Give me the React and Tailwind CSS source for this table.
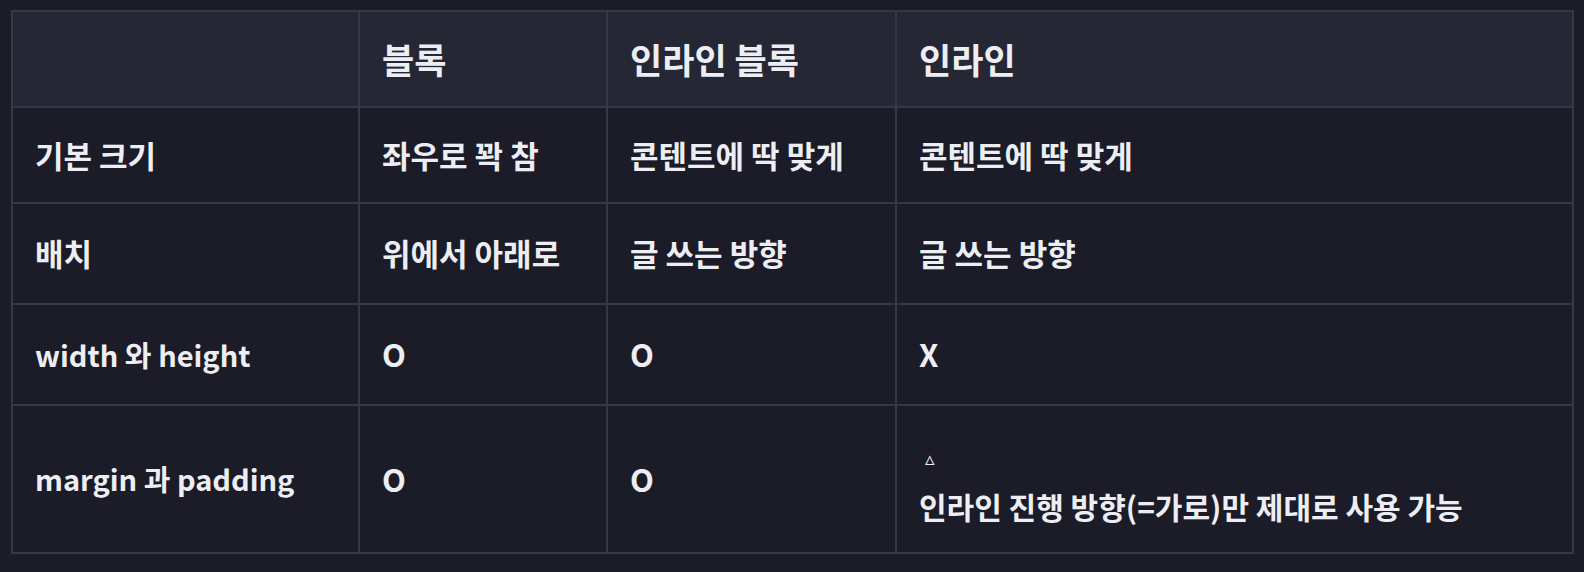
const rows = [
  { label: "기본 크기", block: "좌우로 꽉 참", inlineBlock: "콘텐트에 딱 맞게", inline: "콘텐트에 딱 맞게", h: "h-[96px]", labelSize: "" },
  { label: "배치", block: "위에서 아래로", inlineBlock: "글 쓰는 방향", inline: "글 쓰는 방향", h: "h-[101px]", labelSize: "" },
  { label: "width 와 height", block: "O", inlineBlock: "O", inline: "X", h: "h-[101px]", labelSize: "text-[29px]" },
];

export default function App() {
  const cell = "border-2 border-[#363849] px-[22px] align-middle";

  return (
    <div
      className="w-[1584px] h-[572px] bg-[#1b1c27] pt-[10px] pl-[11px] text-[#eceef3] font-bold"
      style={{ fontFamily: '"Noto Sans CJK KR", "Noto Sans", sans-serif' }}
    >
      <table className="table-fixed border-collapse w-[1563px] text-[31px]">
        <colgroup>
          <col className="w-[347px]" />
          <col className="w-[248px]" />
          <col className="w-[289px]" />
          <col />
        </colgroup>
        <thead>
          <tr className="h-[96px] bg-[#252734] text-left text-[35px]">
            <th className={cell}></th>
            <th className={cell + " font-bold"}>블록</th>
            <th className={cell + " font-bold"}>인라인 블록</th>
            <th className={cell + " font-bold"}>인라인</th>
          </tr>
        </thead>
        <tbody>
          {rows.map((r) => (
            <tr key={r.label} className={r.h}>
              <td className={cell + " " + r.labelSize}>{r.label}</td>
              <td className={cell}>{r.block}</td>
              <td className={cell}>{r.inlineBlock}</td>
              <td className={cell}>{r.inline}</td>
            </tr>
          ))}
          <tr className="h-[148px]">
            <td className={cell + " text-[29px]"}>margin 과 padding</td>
            <td className={cell}>O</td>
            <td className={cell}>O</td>
            <td className={cell + " text-[30px] leading-[48px]"}>
              <span
                className="pl-[6px] text-[19px]"
                style={{ fontFamily: '"DejaVu Sans", sans-serif' }}
              >
                ▵
              </span>
              <br />
              인라인 진행 방향(=가로)만 제대로 사용 가능
            </td>
          </tr>
        </tbody>
      </table>
    </div>
  );
}
